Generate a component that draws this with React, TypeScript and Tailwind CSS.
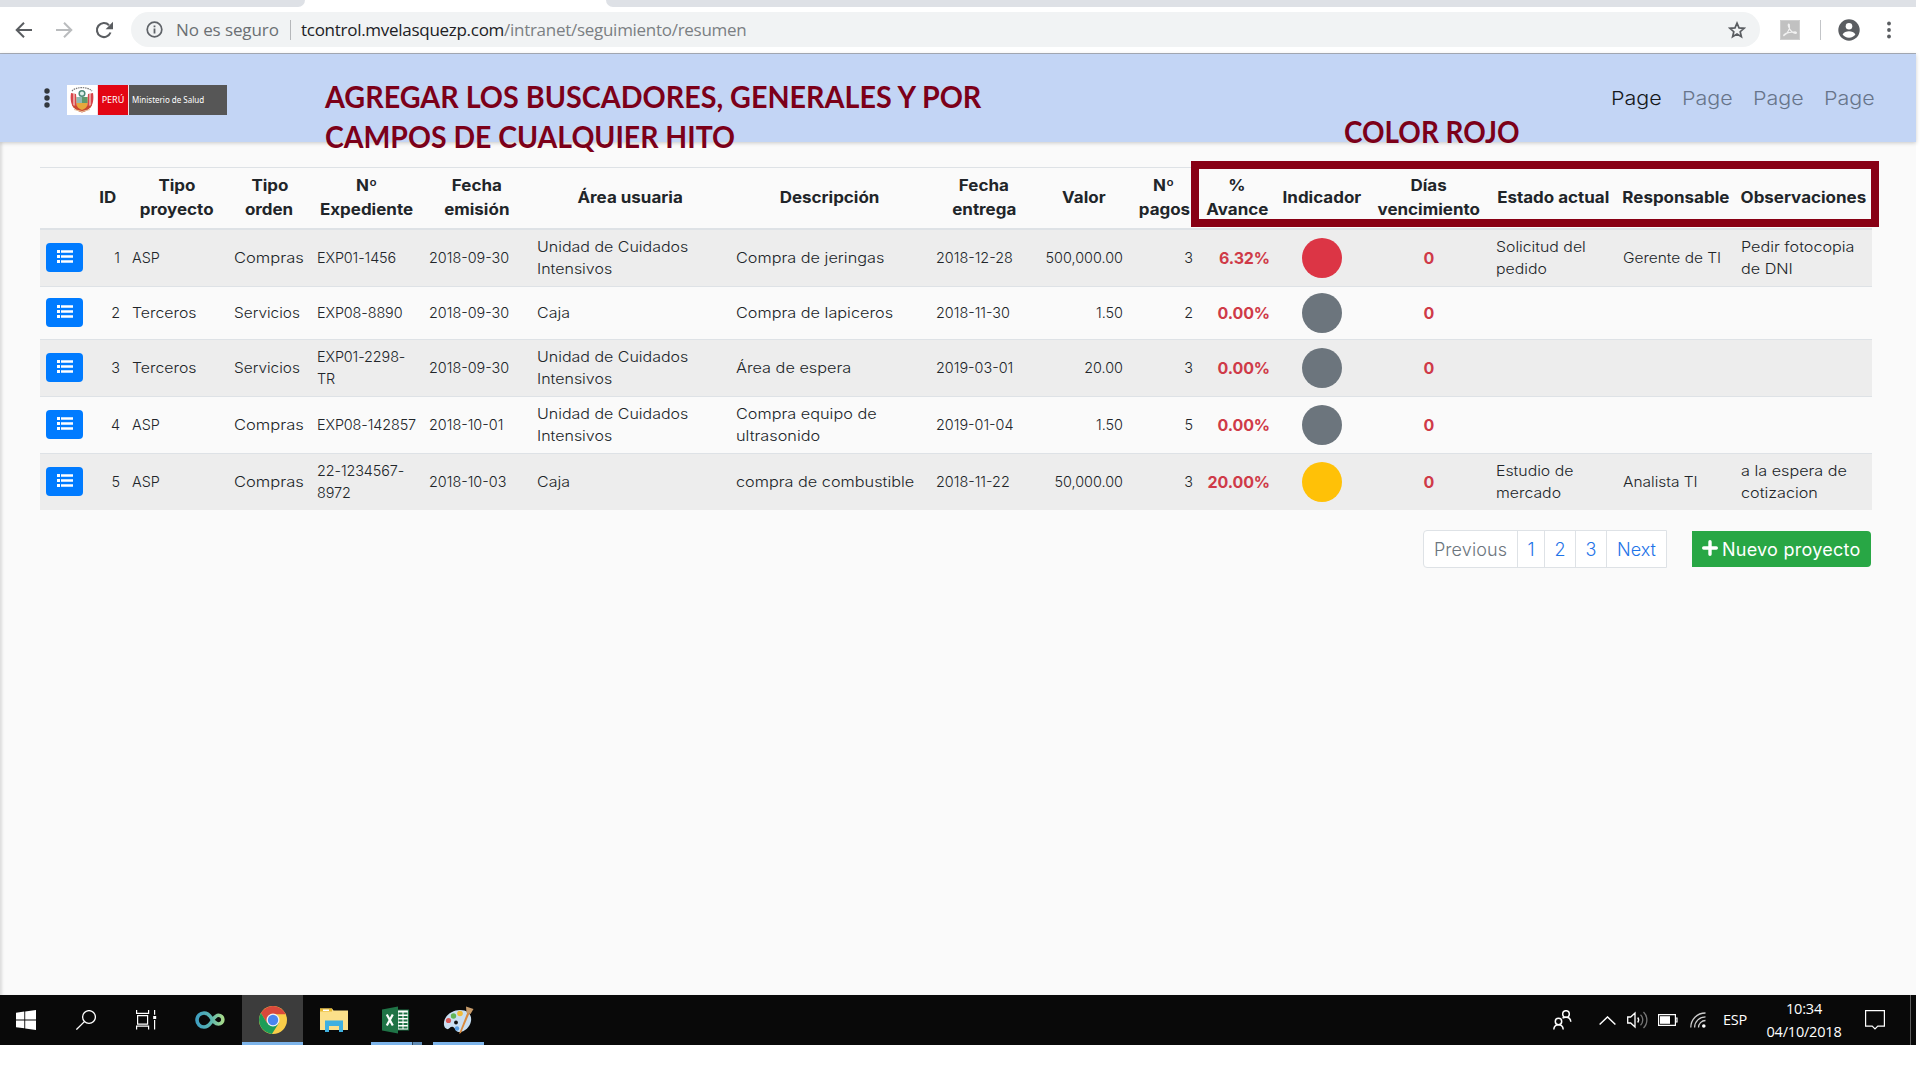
import React from "react";

const columns =
  "grid grid-cols-[50px_36px_102px_83px_112px_108px_199px_200px_108px_91px_70px_76px_93px_122px_127px_118px_137px] items-center";

type Row = {
  id: number;
  tipo: string;
  orden: string;
  expediente: string[];
  emision: string;
  area: string[];
  descripcion: string[];
  entrega: string;
  valor: string;
  pagos: number;
  avance: string;
  dot: string;
  estado: string[];
  responsable: string;
  observaciones: string[];
  look: string;
};

const rows: Row[] = [
  {
    id: 1, tipo: "ASP", orden: "Compras", expediente: ["EXP01-1456"], emision: "2018-09-30",
    area: ["Unidad de Cuidados", "Intensivos"], descripcion: ["Compra de jeringas"], entrega: "2018-12-28",
    valor: "500,000.00", pagos: 3, avance: "6.32%", dot: "bg-[#dc3545]",
    estado: ["Solicitud del", "pedido"], responsable: "Gerente de TI", observaciones: ["Pedir fotocopia", "de DNI"],
    look: "h-[56px] bg-[#ededed]",
  },
  {
    id: 2, tipo: "Terceros", orden: "Servicios", expediente: ["EXP08-8890"], emision: "2018-09-30",
    area: ["Caja"], descripcion: ["Compra de lapiceros"], entrega: "2018-11-30",
    valor: "1.50", pagos: 2, avance: "0.00%", dot: "bg-[#6c757d]",
    estado: [], responsable: "", observaciones: [],
    look: "h-[53px] border-t border-[#dee2e6]",
  },
  {
    id: 3, tipo: "Terceros", orden: "Servicios", expediente: ["EXP01-2298-", "TR"], emision: "2018-09-30",
    area: ["Unidad de Cuidados", "Intensivos"], descripcion: ["Área de espera"], entrega: "2019-03-01",
    valor: "20.00", pagos: 3, avance: "0.00%", dot: "bg-[#6c757d]",
    estado: [], responsable: "", observaciones: [],
    look: "h-[57px] border-t border-[#dee2e6] bg-[#ededed]",
  },
  {
    id: 4, tipo: "ASP", orden: "Compras", expediente: ["EXP08-142857"], emision: "2018-10-01",
    area: ["Unidad de Cuidados", "Intensivos"], descripcion: ["Compra equipo de", "ultrasonido"], entrega: "2019-01-04",
    valor: "1.50", pagos: 5, avance: "0.00%", dot: "bg-[#6c757d]",
    estado: [], responsable: "", observaciones: [],
    look: "h-[57px] border-t border-[#dee2e6]",
  },
  {
    id: 5, tipo: "ASP", orden: "Compras", expediente: ["22-1234567-", "8972"], emision: "2018-10-03",
    area: ["Caja"], descripcion: ["compra de combustible"], entrega: "2018-11-22",
    valor: "50,000.00", pagos: 3, avance: "20.00%", dot: "bg-[#ffc107]",
    estado: ["Estudio de", "mercado"], responsable: "Analista TI", observaciones: ["a la espera de", "cotizacion"],
    look: "h-[57px] border-t border-[#dee2e6] bg-[#ededed]",
  },
];

const headings: string[][] = [
  [], ["ID"], ["Tipo", "proyecto"], ["Tipo", "orden"], ["Nº", "Expediente"], ["Fecha", "emisión"],
  ["Área usuaria"], ["Descripción"], ["Fecha", "entrega"], ["Valor"], ["Nº", "pagos"], ["%", "Avance"],
  ["Indicador"], ["Días", "vencimiento"], ["Estado actual"], ["Responsable"], ["Observaciones"],
];

function Cell({ lines, className = "", text = "" }: { lines: string[]; className?: string; text?: string }) {
  return (
    <div className={`whitespace-nowrap px-[6px] ${className}`}>
      {lines.map((line) => (
        <div key={line} className={text}>
          {line}
        </div>
      ))}
    </div>
  );
}

function BrowserBar() {
  return (
    <div className="font-['Open_Sans',sans-serif]">
      <div className="flex h-[7px] justify-between bg-white">
        <div className="w-[305px] rounded-br-[7px] bg-[#dee1e6]" />
        <div className="w-[1310px] rounded-bl-[7px] bg-[#dee1e6]" />
      </div>
      <div className="flex h-[47px] items-center border-b border-[#a9afb9] bg-white pt-px pb-[2px]">
        <svg className="ml-[15px] h-[18px] w-[18px]" viewBox="0 0 18 18" fill="none" stroke="#5a5d61" strokeWidth="2">
          <path d="M17 9H2M9 1.7 1.7 9 9 16.3" />
        </svg>
        <svg className="ml-[22px] h-[18px] w-[18px]" viewBox="0 0 18 18" fill="none" stroke="#babcbe" strokeWidth="2">
          <path d="M1 9h15M9 1.7 16.3 9 9 16.3" />
        </svg>
        <svg className="ml-[22px] h-[18px] w-[18px]" viewBox="0 0 18 18">
          <path d="M15.5 11.5A7 7 0 1 1 14 4.2" fill="none" stroke="#5a5d61" strokeWidth="2.1" />
          <path d="M18 .8v7.4h-7.4z" fill="#5a5d61" />
        </svg>
        <div className="ml-[18px] flex h-[35px] w-[1629px] items-center rounded-full bg-[#f1f3f4] pl-[15px] pr-[14px] text-[17px]">
          <svg className="h-[17px] w-[17px]" viewBox="0 0 17 17">
            <circle cx="8.5" cy="8.5" r="7.3" fill="none" stroke="#5f6368" strokeWidth="1.7" />
            <path d="M7.6 7.5h1.8v5H7.6zM7.6 4.4h1.8v1.8H7.6z" fill="#5f6368" />
          </svg>
          <span className="ml-[13px] w-[114px] whitespace-nowrap tracking-[-0.1px] text-[#6b6f73]">No es seguro</span>
          <span className="h-5 w-px bg-[#b5b7ba]" />
          <span className="ml-[10px] whitespace-nowrap tracking-[-0.28px] text-[#202124]">
            tcontrol.mvelasquezp.com<span className="text-[#7b7f83]">/intranet/seguimiento/resumen</span>
          </span>
          <svg className="ml-auto h-[18px] w-[18px]" viewBox="0 0 18 18" fill="none" stroke="#5a5d61" strokeWidth="1.7">
            <path d="m9 2.2 2 4.7 5.1.4-3.9 3.4 1.2 5L9 13l-4.4 2.7 1.2-5-3.9-3.4 5.1-.4z" />
          </svg>
        </div>
        <svg className="ml-[20px] h-5 w-5" viewBox="0 0 20 20">
          <rect width="20" height="20" fill="#cfcfcf" />
          <rect x="1" y="1" width="18" height="18" fill="#c1c1c1" />
          <path d="M4 15.5C8 13.500 10.500 8 9.300 4.500c-.7-1.300-1.500 0-.8 2C10 10.500 12.500 13 15.500 13.400c1.800 0 1-1.600-1-1.500C10 12 6 13.200 4.300 14.500c-1 .9-.6 1.300-.3 1z" fill="none" stroke="#f2f2f2" strokeWidth="1.1" />
        </svg>
        <span className="ml-[20px] h-5 w-px bg-[#c3c5c8]" />
        <svg className="ml-[17px] h-[22px] w-[22px]" viewBox="0 0 22 22">
          <circle cx="11" cy="11" r="10.700" fill="#5a5d61" />
          <circle cx="11" cy="7.200" r="3.300" fill="#fff" />
          <path d="M4.600 15.500c1-2.500 4-3.200 6.400-3.200s5.400.7 6.400 3.200c-1.300 2-3.600 3.200-6.400 3.200s-5.100-1.200-6.400-3.200z" fill="#fff" />
        </svg>
        <svg className="ml-[26px] h-[18px] w-[6px]" viewBox="0 0 6 18" fill="#5a5d61">
          <circle cx="3" cy="2.500" r="1.900" />
          <circle cx="3" cy="9" r="1.900" />
          <circle cx="3" cy="15.500" r="1.900" />
        </svg>
      </div>
    </div>
  );
}

function MinistryLogo() {
  return (
    <div className="ml-[17px] flex h-[30px] w-[160px] gap-px bg-[#f3dfe3] font-['Noto_Sans',sans-serif] text-white">
      <svg className="h-[30px] w-[30px]" viewBox="0 0 30 30">
        <rect width="30" height="30" fill="#fff" />
        <path d="M5 6C9 1.500 21 1.500 25 6" fill="none" stroke="#777" strokeWidth="1.200" strokeDasharray="1.500 .8" />
        <path d="M4 8l5 1 1 12-3 2c-3-3-4-9-3-15zM26 8l-5 1-1 12 3 2c3-3 4-9 3-15z" fill="#d8444a" />
        <path d="M7 8v14M23 8v14" stroke="#f4d9d0" strokeWidth="1.200" />
        <path d="M5 20c2 4 6 6.500 10 7.500 4-1 8-3.500 10-7.500l-4 1H9z" fill="#c9472f" />
        <circle cx="15" cy="8.500" r="2.800" fill="#dff0ea" stroke="#4d8a78" strokeWidth="1.500" />
        <path d="M9.500 12h11v7c0 3-2.500 5-5.500 6-3-1-5.500-3-5.500-6z" fill="#e6a83c" />
        <path d="M9.500 12H15v6H9.500z" fill="#8fb8b4" />
        <path d="M15 12h5.500v6H15z" fill="#5f9a6b" />
        <path d="M7 24.500l8 2 8-2" fill="none" stroke="#e9c8a0" strokeWidth="1" />
      </svg>
      <div className="flex w-[30px] items-center justify-center bg-[#e30513] text-[9px]">PERÚ</div>
      <div className="flex flex-1 items-center whitespace-nowrap bg-[#565656] pl-[3px] text-[8px]">Ministerio de Salud</div>
    </div>
  );
}

function SiteHeader() {
  return (
    <div className="relative flex h-[88px] items-center bg-[#c3d5f5] pt-[4px] pb-px shadow-[0_1px_4px_rgba(0,0,0,0.2)]">
      <svg className="mt-[-3px] ml-[44px] h-5 w-[6px]" viewBox="0 0 6 20" fill="#32383e">
        <circle cx="3" cy="3" r="2.700" />
        <circle cx="3" cy="10" r="2.700" />
        <circle cx="3" cy="17" r="2.700" />
      </svg>
      <MinistryLogo />
      <div className="ml-auto flex gap-[20px] pr-[41px] text-[19px] font-light text-[#68758b]">
        <span className="w-[51px] origin-left scale-x-[1.13] text-[#16181b]">Page</span>
        <span className="w-[51px] origin-left scale-x-[1.13]">Page</span>
        <span className="w-[51px] origin-left scale-x-[1.13]">Page</span>
        <span className="w-[51px] origin-left scale-x-[1.13]">Page</span>
      </div>
      <div className="absolute top-[22px] left-[325px] whitespace-nowrap font-[Lato,sans-serif] text-[30px] leading-10 font-bold text-[#7c0019]">
        <div className="origin-left scale-x-[0.957]">AGREGAR LOS BUSCADORES, GENERALES Y POR</div>
        <div className="origin-left scale-x-[0.947]">CAMPOS DE CUALQUIER HITO</div>
      </div>
      <div className="absolute top-[57px] left-[1344px] origin-left scale-x-[0.93] whitespace-nowrap font-[Lato,sans-serif] text-[30px] leading-10 font-bold text-[#7c0019]">
        COLOR ROJO
      </div>
    </div>
  );
}

function ProjectTable() {
  return (
    <div className="relative mx-[40px] mt-[25px] w-[1832px] text-[#212529]">
      <div className={`${columns} h-[63px] border-t border-b-2 border-[#dee2e6] text-center text-[15.5px] leading-6 font-bold`}>
        {headings.map((lines, i) => (
          <Cell key={i} lines={lines} className="flex flex-col items-center" text="scale-x-[1.095]" />
        ))}
      </div>
      {rows.map((r) => (
        <div key={r.id} className={`${columns} text-[14.4px] leading-[22px] font-light ${r.look}`}>
          <div className="pl-[6px]">
            <div className="mt-[-2px] flex h-[29px] w-[37px] items-center justify-center rounded-[4px] bg-[#007bff] pb-[2px]">
              <svg className="h-[13px] w-[16px]" viewBox="0 0 16 13" fill="#fff">
                <path d="M0 0h3v3H0zM4 .3h12v2.400H4zM0 5h3v3H0zM4 5.300h12v2.400H4zM0 10h3v3H0zM4 10.300h12v2.400H4z" />
              </svg>
            </div>
          </div>
          <Cell lines={[String(r.id)]} className="text-right" />
          <Cell lines={[r.tipo]} text={r.tipo === "ASP" ? "" : "origin-left scale-x-[1.1]"} />
          <Cell
            lines={[r.orden]}
            text={r.orden === "Compras" ? "origin-left scale-x-[1.15]" : "origin-left scale-x-[1.07]"}
          />
          <Cell lines={r.expediente} className="tracking-[-0.1px]" />
          <Cell lines={[r.emision]} />
          <Cell lines={r.area} text="origin-left scale-x-[1.11]" />
          <Cell lines={r.descripcion} text="origin-left scale-x-[1.13]" />
          <Cell lines={[r.entrega]} />
          <Cell lines={[r.valor]} className="text-right" />
          <Cell lines={[String(r.pagos)]} className="text-right" />
          <Cell lines={[r.avance]} className="mr-[-1px] text-right text-[16px] font-bold tracking-[-0.1px] text-[#cf3a48]" />
          <div className={`h-10 w-10 justify-self-center rounded-full ${r.dot}`} />
          <Cell lines={["0"]} className="text-center text-[16px] font-bold text-[#cf3a48]" />
          <Cell lines={r.estado} text="origin-left scale-x-[1.1]" />
          <Cell lines={[r.responsable]} text="origin-left scale-x-[1.075]" />
          <Cell lines={r.observaciones} text="origin-left scale-x-[1.125]" />
        </div>
      ))}
      <div className="absolute top-[-6px] left-[1151px] h-[66px] w-[688px] border-8 border-[#880015]" />
    </div>
  );
}

function TableFooter() {
  return (
    <div className="mt-[20px] flex items-center justify-end pr-[45px] text-[18px]">
      <div className="flex h-[38px] rounded-l-[4px] border border-[#dee2e6] bg-white font-light text-[#1f74e8]">
        <span className="flex w-[94px] items-center justify-center border-r border-[#dee2e6] tracking-[0.1px] text-[#6c757d]">Previous</span>
        <span className="flex w-[27px] items-center justify-center border-r border-[#dee2e6]">1</span>
        <span className="flex w-[31px] items-center justify-center border-r border-[#dee2e6]">2</span>
        <span className="flex w-[31px] items-center justify-center border-r border-[#dee2e6]">3</span>
        <span className="flex w-[59px] items-center justify-center">Next</span>
      </div>
      <div className="ml-[25px] flex h-[36px] w-[179px] items-center rounded-r-[4px] bg-[#28a745] pl-[10px] text-white">
        <svg className="mt-[-2px] h-4 w-4" viewBox="0 0 16 16" stroke="#fff" strokeWidth="3.400" strokeLinecap="round">
          <path d="M8 1.700v12.600M1.700 8h12.600" />
        </svg>
        <span className="ml-[4px] whitespace-nowrap tracking-[0.25px]">Nuevo proyecto</span>
      </div>
    </div>
  );
}

function Taskbar() {
  return (
    <div className="flex h-[50px] items-center bg-[#090909] font-['Open_Sans',sans-serif] text-[14.500px] text-white">
      <svg className="ml-[16px] h-5 w-5" viewBox="0 0 20 20" fill="#fff">
        <path d="M0 2.800 8.300 1.600v7.900H0zM9.200 1.500 20 0v9.500H9.200zM0 10.400h8.300v7.900L0 17.200zM9.200 10.400H20V20L9.200 18.500z" />
      </svg>
      <svg className="ml-[40px] h-5 w-5" viewBox="0 0 20 20" fill="none" stroke="#fff" strokeWidth="1.300">
        <circle cx="13" cy="7" r="6.400" />
        <path d="M8.400 11.600.4 19.600" />
      </svg>
      <svg className="ml-[40px] h-5 w-[21px]" viewBox="0 0 21 20" fill="none" stroke="#fff" strokeWidth="1.200">
        <path d="M.6 0v3.400h12V0M.6 19.600v-3.400h12v3.400M1.600 5.600h10v8.600h-10zM18.600 0v4.800M18.600 10v9.600" />
        <path d="M17.200 6h3v3h-3z" fill="#fff" stroke="none" />
      </svg>
      <svg className="ml-[38px] h-[20px] w-[30px]" viewBox="0 0 30 20" fill="none" strokeWidth="3.600">
        <defs>
          <linearGradient id="loop" x1="0" x2="1" y1="0" y2="0">
            <stop offset="0" stopColor="#3f9fc0" />
            <stop offset=".55" stopColor="#5cb7b0" />
            <stop offset="1" stopColor="#a5d98a" />
          </linearGradient>
        </defs>
        <path d="M16 12.500C13.500 16 11.500 17 9 17a7 7 0 1 1 0-14c3 0 5 1.500 7 4.500 2.500 4 4 6.500 7.500 6.500a4.300 4.300 0 1 0 0-8.700c-3.500 0-5 3.500-7.500 7.200z" stroke="url(#loop)" />
      </svg>
      <div className="ml-[17px] flex h-[50px] w-[61px] flex-col items-center justify-between border-b-[3px] border-[#7db4ea] bg-[#3c3c3c] pt-[11px]">
        <svg className="h-7 w-7" viewBox="0 0 28 28">
          <circle cx="14" cy="14" r="14" fill="#f9cd48" />
          <path d="M14 14 8.200 17.400 1.900 7A14 14 0 0 1 26.100 7L26.600 8.200H14z" fill="#d9483b" />
          <path d="M1.900 7a14 14 0 0 0 11 20.900L19.600 17.500 14 14l-5.800 3.200z" fill="#1d9d58" />
          <circle cx="14" cy="14" r="6.500" fill="#f3f3f3" />
          <circle cx="14" cy="14" r="5.200" fill="#4a86ee" />
        </svg>
      </div>
      <svg className="ml-[17px] h-6 w-7" viewBox="0 0 28 24">
        <path d="M0 .5h12l1.500 2H28V22H0z" fill="#fbe08a" />
        <path d="M0 .5h12v3H0z" fill="#e6b830" />
        <path d="M3 1.500h6v1.500H3z" fill="#fff" />
        <path d="M5 12.500h18V24h-4v-6H9v6H5z" fill="#3fb0e0" />
      </svg>
      <div className="ml-[23px] flex h-[50px] w-[51px] flex-col items-center pt-[11px]">
        <svg className="mr-[2px] h-[28px] w-[28px]" viewBox="0 0 28 28">
          <path d="M14 4h12.500v20H14z" fill="#fff" stroke="#1d7044" strokeWidth="1.200" />
          <path d="M16.500 7.500h4M16.500 11h4M16.500 14.500h4M16.500 18h4M16.500 21.500h4M21.500 7.500h4M21.500 11h4M21.500 14.500h4M21.500 18h4M21.500 21.500h4" stroke="#1d7044" strokeWidth="1.800" />
          <path d="M0 3.500 16 .5v27L0 24.500z" fill="#1f7346" />
          <path d="m4.800 8.500 6 11M10.800 8.500l-6 11" stroke="#fff" strokeWidth="2.200" />
        </svg>
        <div className="mt-auto flex h-[3px] w-[51px] bg-[#7db4ea]">
          <div className="ml-auto h-[3px] w-[10px] border-l border-[#2d4256] bg-[#5f8ab4]" />
        </div>
      </div>
      <div className="ml-[11px] flex h-[50px] w-[51px] flex-col items-center border-b-[3px] border-[#7db4ea] pt-[10px]">
        <svg className="h-[29px] w-[31px]" viewBox="0 0 31 29">
          <path d="M1 20C0 11 9 5 17 5s12 5 11 11-6 11-12 11c-4 0-3-4-6-5s-4 3-6 2-2.700-2-3-4z" fill="#c9dff2" />
          <circle cx="13" cy="17.500" r="1.900" fill="#111" />
          <circle cx="5.500" cy="15.500" r="2.600" fill="#d95a58" />
          <circle cx="10.500" cy="11" r="2.700" fill="#62b558" />
          <circle cx="17" cy="8.500" r="2.800" fill="#f0bb3a" />
          <circle cx="14" cy="23.500" r="2.200" fill="#5a9ee0" />
          <path d="m24.500 7 2.200.8L18 28l-2 .8z" fill="#d98a3e" />
          <path d="M23 1.500 30.500 4l-3 5-4-1.300z" fill="#c79b6a" />
        </svg>
      </div>

      <svg className="ml-auto h-5 w-[19px]" viewBox="0 0 19 20" fill="none" stroke="#fff" strokeWidth="1.500">
        <circle cx="13" cy="4" r="3.300" />
        <circle cx="5.500" cy="11.500" r="3.200" />
        <path d="M.8 19.500c.2-3 2-4.800 4.700-4.800s4.500 1.800 4.700 4.800M9.500 8.200c1-.7 2-1 3.500-1 3 0 4.600 1.800 4.800 4.500" />
      </svg>
      <svg className="ml-[27px] h-[9px] w-[17px]" viewBox="0 0 17 9" fill="none" stroke="#fff" strokeWidth="1.400">
        <path d="M.6 8.500 8.500.9l7.900 7.600" />
      </svg>
      <svg className="ml-[11px] h-[18px] w-[21px]" viewBox="0 0 21 18" fill="none" stroke="#fff" strokeWidth="1.300">
        <path d="M.7 6h3L8 2v14l-4.300-4h-3z" />
        <path d="M10.700 6.500c1.200 1.500 1.200 3.500 0 5" />
        <path d="M13.500 3.700c3 3 3 7.500 0 10.600M16.500 1c4.500 4.500 4.500 11.500 0 16" stroke="#777" />
      </svg>
      <svg className="ml-[10px] h-[12px] w-[20px]" viewBox="0 0 20 12">
        <path d="M.6.6h16.800v10.800H.6zM17.400 4h1.600v4h-1.600z" fill="none" stroke="#fff" strokeWidth="1.200" />
        <path d="M2 2.200h10v7.600H2z" fill="#fff" />
      </svg>
      <svg className="ml-[12px] h-[16px] w-[17px]" viewBox="0 0 17 16" fill="none" stroke="#ccc" strokeWidth="1.300">
        <path d="M.8 15.500C.8 7.500 7 1 15.500 1M4.600 15.500c0-6 5-10.700 10.900-10.700M8.500 15.500c0-3.700 3-7 7-7" />
        <circle cx="13.800" cy="14" r="1.800" fill="#fff" stroke="none" />
      </svg>
      <span className="ml-[16px] w-[26px] tracking-[-0.3px]">ESP</span>
      <div className="ml-[11px] w-[88px] text-center leading-[23px] tracking-[-0.2px]">
        <div>10:34</div>
        <div>04/10/2018</div>
      </div>
      <svg className="ml-[17px] h-5 w-5" viewBox="0 0 20 20" fill="none" stroke="#fff" strokeWidth="1.200">
        <path d="M.6.6h18.800v15.600h-6.600L10 19l-2.800-2.800H.6z" />
      </svg>
      <span className="mr-[5px] ml-[25px] h-[50px] w-px bg-[#5c5c5c]" />
    </div>
  );
}

export default function App() {
  return (
    <div className="h-[1080px] w-[1920px] overflow-hidden bg-white">
      <div className="w-[1916px] font-[Inter,sans-serif]">
        <BrowserBar />
        <div className="h-[941px] bg-[#fafafa] shadow-[inset_3px_0_3px_-1px_rgba(0,0,0,0.12)]">
          <SiteHeader />
          <ProjectTable />
          <TableFooter />
        </div>
        <Taskbar />
      </div>
    </div>
  );
}
